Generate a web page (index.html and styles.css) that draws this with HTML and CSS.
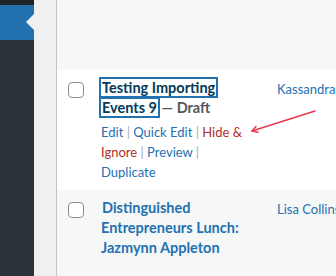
FILE: index.html
```html
<!DOCTYPE html>
<html>
<head>
<meta charset="utf-8">
<link rel="stylesheet" href="styles.css">
</head>
<body>
<nav class="adminmenu">
  <div class="menu-bar"></div>
  <div class="menu-current"></div>
  <div class="menu-rest"></div>
</nav>
<div class="gutter"></div>
<main class="table">
  <div class="row row-alt row-top"></div>
  <div class="row">
    <div class="check"><span class="checkbox"></span></div>
    <div class="title">
      <strong><a class="row-title focused" href="#">Testing Importing Events 9</a> <span class="post-state">— Draft</span></strong>
      <div class="row-actions">
        <a href="#">Edit</a> <span class="sep">|</span> <a href="#">Quick Edit</a> <span class="sep">|</span> <a class="danger" href="#">Hide &amp; Ignore</a> <span class="sep">|</span> <a href="#">Preview</a> <span class="sep">|</span> <a href="#">Duplicate</a>
      </div>
    </div>
    <div class="author"><a href="#">Kassandra</a></div>
  </div>
  <div class="row row-alt row-fill">
    <div class="check"><span class="checkbox"></span></div>
    <div class="title">
      <strong><a class="row-title" href="#">Distinguished Entrepreneurs Lunch: Jazmynn Appleton</a></strong>
    </div>
    <div class="author"><a href="#">Lisa Collins</a></div>
  </div>
</main>
<svg class="annotation" width="336" height="276" viewBox="0 0 336 276">
  <g stroke="#e53a52" stroke-width="1.5" fill="none" stroke-linecap="round" stroke-linejoin="round">
    <line x1="315" y1="111" x2="252" y2="131"/>
    <polyline points="256,126.6 252,131 257.9,132.3"/>
  </g>
</svg>
</body>
</html>
```
FILE: styles.css
```css
html, body {
  margin: 0;
  padding: 0;
}
body {
  width: 336px;
  height: 276px;
  overflow: hidden;
  display: flex;
  position: relative;
  font-family: Lato, "Open Sans", sans-serif;
  font-size: 13px;
  line-height: 20px;
  color: #3c434a;
}
a {
  color: #2271b1;
  text-decoration: none;
}
.adminmenu {
  width: 34px;
  flex: none;
  display: flex;
  flex-direction: column;
  background: #2c3338;
}
.menu-bar {
  height: 5px;
  background: #1d2327;
}
.menu-current {
  height: 35px;
  background: #2271b1;
  position: relative;
}
.menu-current::after {
  content: "";
  position: absolute;
  right: 0;
  top: 9px;
  border-top: 8px solid transparent;
  border-bottom: 8px solid transparent;
  border-right: 8px solid #f0f0f1;
}
.menu-rest {
  flex: 1;
}
.gutter {
  width: 22px;
  flex: none;
  background: #f0f0f1;
}
.table {
  flex: 1;
  min-width: 0;
  border-left: 1px solid #c3c4c7;
  display: flex;
  flex-direction: column;
  background: #fff;
}
.row {
  display: grid;
  grid-template-columns: 44px 176px 1fr;
  padding: 8px 0;
}
.row-alt {
  background: #f6f7f7;
}
.row-top {
  height: 70px;
  padding: 0;
  box-sizing: border-box;
}
.row-fill {
  flex: 1;
}
.check {
  padding-left: 11px;
  padding-top: 4px;
}
.checkbox {
  display: block;
  width: 14px;
  height: 14px;
  border: 1px solid #8c8f94;
  border-radius: 4px;
  background: #fff;
}
.title {
  padding-right: 26px;
  font-size: 14.5px;
  line-height: 20px;
}
.row-title {
  font-weight: 700;
  padding: 0 1px;
}
.row-title.focused {
  color: #043959;
  box-shadow: 0 0 0 2px #2271b1;
  -webkit-box-decoration-break: clone;
  box-decoration-break: clone;
}
.post-state {
  color: #50575e;
  font-weight: 700;
}
.row-actions {
  font-size: 13px;
  line-height: 20px;
  padding-top: 4px;
}
.row-actions .danger {
  color: #b32d2e;
}
.sep {
  color: #a7aaad;
}
.author {
  font-size: 13px;
  white-space: nowrap;
  padding-top: 1px;
}
.annotation {
  position: absolute;
  left: 0;
  top: 0;
  pointer-events: none;
}
```
